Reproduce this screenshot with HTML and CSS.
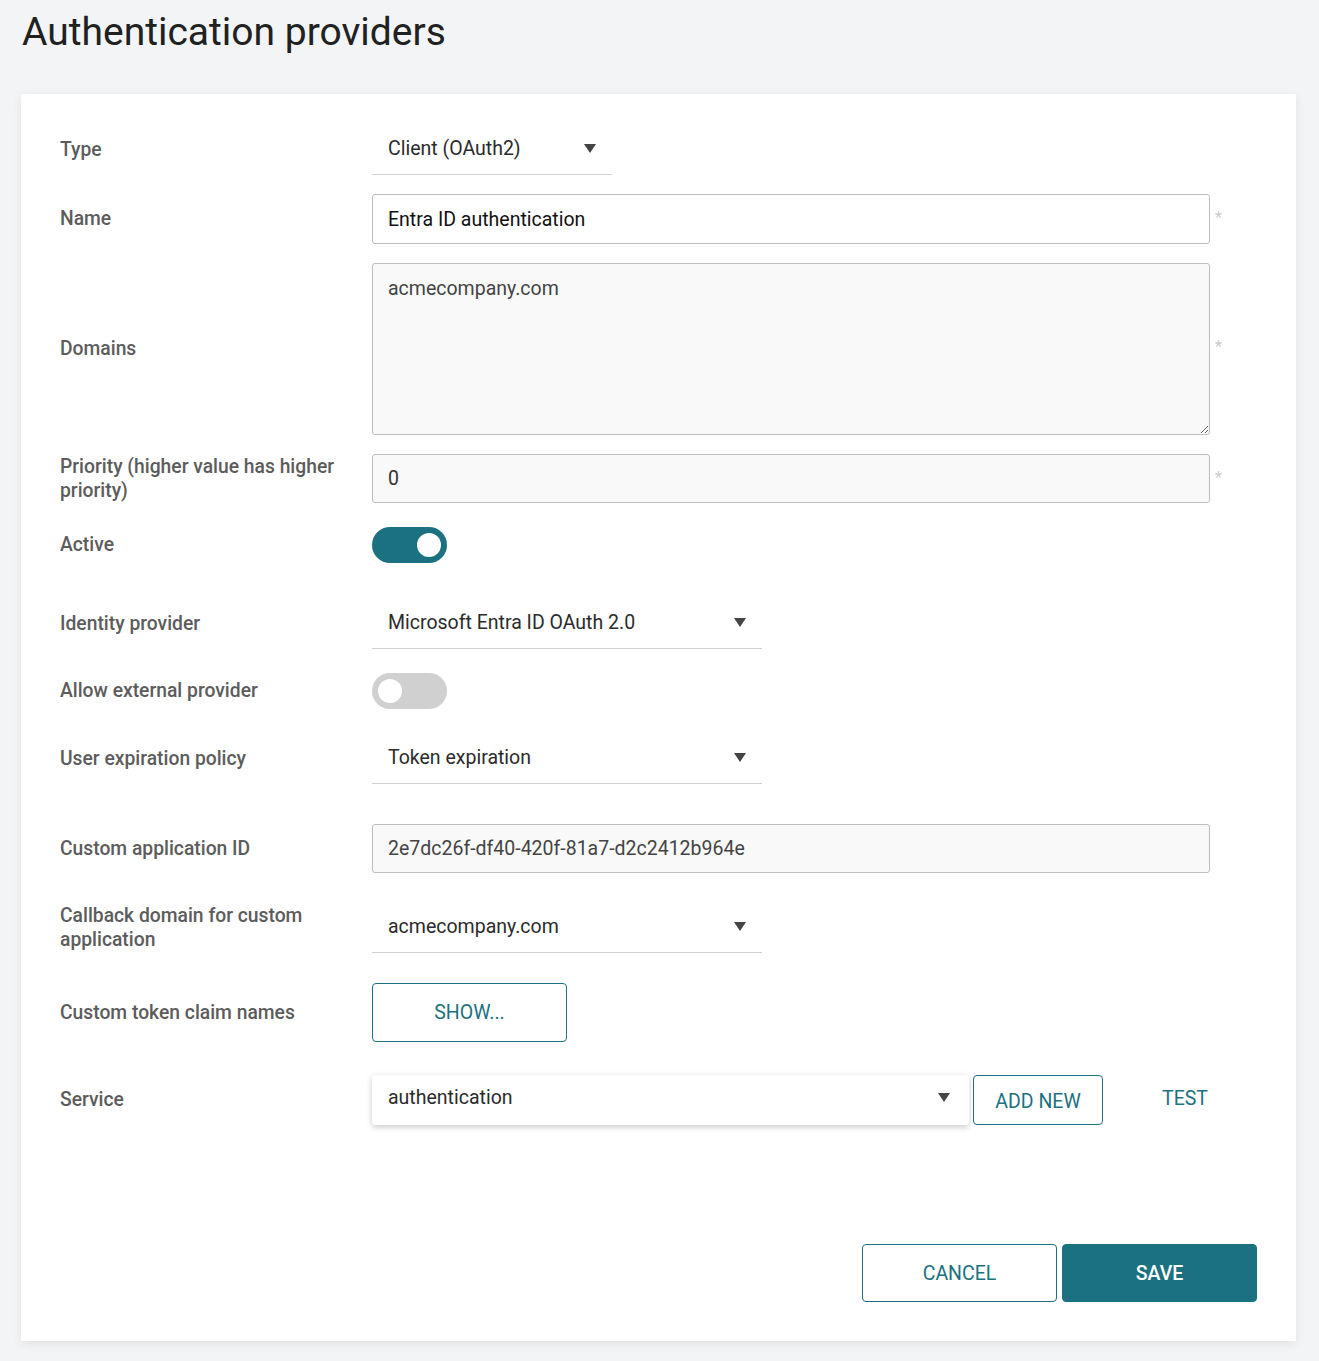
FILE: index.html
```html
<!DOCTYPE html>
<html lang="en">
<head>
    <meta charset="UTF-8">
    <meta name="viewport" content="width=device-width, initial-scale=1.0">
    <title>Authentication providers</title>
    <link rel="stylesheet" href="styles.css">
</head>
<body>
    <h1 class="page-title">Authentication providers</h1>

    <div class="card">
        <div class="form">
            <div class="row">
                <label class="label">Type</label>
                <div class="select select-sm">
                    <span>Client (OAuth2)</span>
                    <span class="arrow"></span>
                </div>
            </div>

            <div class="row">
                <label class="label">Name</label>
                <input class="input input-white" type="text" value="Entra ID authentication">
                <span class="req">*</span>
            </div>

            <div class="row">
                <label class="label">Domains</label>
                <textarea class="input textarea">acmecompany.com</textarea>
                <span class="req">*</span>
            </div>

            <div class="row">
                <label class="label">Priority (higher value has higher priority)</label>
                <input class="input" type="text" value="0">
                <span class="req">*</span>
            </div>

            <div class="row row-toggle">
                <label class="label">Active</label>
                <span class="toggle on"><span class="knob"></span></span>
            </div>

            <div class="row space-md">
                <label class="label">Identity provider</label>
                <div class="select select-md">
                    <span>Microsoft Entra ID OAuth 2.0</span>
                    <span class="arrow"></span>
                </div>
            </div>

            <div class="row row-toggle">
                <label class="label">Allow external provider</label>
                <span class="toggle"><span class="knob"></span></span>
            </div>

            <div class="row">
                <label class="label">User expiration policy</label>
                <div class="select select-md">
                    <span>Token expiration</span>
                    <span class="arrow"></span>
                </div>
            </div>

            <div class="row space-lg">
                <label class="label">Custom application ID</label>
                <input class="input input-id" type="text" value="2e7dc26f-df40-420f-81a7-d2c2412b964e">
            </div>

            <div class="row space-sm">
                <label class="label">Callback domain for custom application</label>
                <div class="select select-md">
                    <span>acmecompany.com</span>
                    <span class="arrow"></span>
                </div>
            </div>

            <div class="row space-md">
                <label class="label">Custom token claim names</label>
                <button class="btn btn-outline btn-show">SHOW...</button>
            </div>

            <div class="row space-service">
                <label class="label">Service</label>
                <div class="select select-raised">
                    <span>authentication</span>
                    <span class="arrow"></span>
                </div>
                <button class="btn btn-outline btn-add">ADD NEW</button>
                <button class="btn btn-text">TEST</button>
            </div>
        </div>

        <div class="actions">
            <button class="btn btn-outline btn-lg">CANCEL</button>
            <button class="btn btn-primary btn-lg">SAVE</button>
        </div>
    </div>
</body>
</html>
```

FILE: styles.css
```css
body {
    background-color: #f3f4f6;
    color: #222;
    font-family: Roboto, "Liberation Sans", sans-serif;
    margin: 0;
    padding: 0 23px 20px 21px;
}

.page-title {
    margin: 0;
    padding: 9px 0 0 1px;
    height: 94px;
    box-sizing: border-box;
    font-size: 39px;
    font-weight: 400;
    color: #212121;
}

.card {
    background-color: #fff;
    box-shadow: 0 3px 10px rgba(0, 0, 0, 0.08);
    padding: 30px 39px 39px 39px;
}

.form {
    display: flex;
    flex-direction: column;
    gap: 19px;
}

.row {
    display: flex;
    align-items: center;
}

.row-toggle {
    min-height: 46px;
}

.space-sm {
    margin-top: 10px;
}

.space-md {
    margin-top: 11px;
}

.space-lg {
    margin-top: 21px;
}

.space-service {
    margin-top: 14px;
}

.label {
    width: 312px;
    flex-shrink: 0;
    padding-right: 20px;
    box-sizing: border-box;
    font-size: 19.3px;
    font-weight: 500;
    line-height: 24px;
    color: #5c5c5c;
}

.input {
    width: 838px;
    height: 49px;
    box-sizing: border-box;
    border: 1px solid #bdbdbd;
    border-radius: 3px;
    background-color: #f9f9f9;
    padding: 0 15px;
    font-family: Roboto, "Liberation Sans", sans-serif;
    font-size: 19.5px;
    color: #333;
    outline: none;
}

.input-white {
    background-color: #fff;
    color: #111;
    height: 50px;
}

.input-id {
    color: #444;
}

.textarea {
    height: 172px;
    padding-top: 13px;
    line-height: 24px;
    resize: vertical;
    color: #444;
}

.req {
    color: #ccc;
    font-size: 16px;
    margin-left: 5px;
    align-self: flex-start;
    margin-top: 14px;
}

.row .textarea ~ .req {
    align-self: center;
    margin-top: -6px;
}

.select {
    display: flex;
    align-items: center;
    justify-content: space-between;
    height: 51px;
    box-sizing: border-box;
    padding: 0 16px 2px 16px;
    border-bottom: 1px solid #d0d0d0;
    font-size: 19.5px;
    color: #2b2b2b;
}

.select-sm {
    width: 240px;
}

.select-md {
    width: 390px;
}

.select-raised {
    width: 597px;
    height: 50px;
    border-bottom: none;
    border-radius: 3px;
    box-shadow: 0 2px 6px rgba(0, 0, 0, 0.22);
    padding-right: 19px;
    padding-bottom: 6px;
}

.arrow {
    width: 0;
    height: 0;
    border-left: 6px solid transparent;
    border-right: 6px solid transparent;
    border-top: 9px solid #444;
}

.toggle {
    display: flex;
    align-items: center;
    width: 75px;
    height: 36px;
    border-radius: 18px;
    background-color: #d0d0d0;
    padding: 0 6px;
    box-sizing: border-box;
}

.toggle.on {
    background-color: #1c7180;
    justify-content: flex-end;
}

.toggle .knob {
    width: 24px;
    height: 24px;
    border-radius: 50%;
    background-color: #fff;
}

.btn {
    font-family: Roboto, "Liberation Sans", sans-serif;
    font-size: 19.5px;
    cursor: pointer;
    border-radius: 4px;
    box-sizing: border-box;
}

.btn-outline {
    background-color: #fff;
    color: #1c7180;
    border: 1px solid #1c7180;
}

.btn-show {
    width: 195px;
    height: 59px;
}

.btn-add {
    width: 130px;
    height: 50px;
    margin-left: 4px;
    padding-top: 4px;
}

.btn-text {
    background: none;
    border: none;
    color: #1c7180;
    width: 90px;
    height: 50px;
    margin-left: 37px;
    padding-bottom: 4px;
}

.actions {
    display: flex;
    justify-content: flex-end;
    gap: 5px;
    margin-top: 119px;
}

.btn-lg {
    width: 195px;
    height: 58px;
}

.btn-primary {
    background-color: #1c7180;
    color: #fff;
    border: 1px solid #1c7180;
    font-weight: 500;
}
```
